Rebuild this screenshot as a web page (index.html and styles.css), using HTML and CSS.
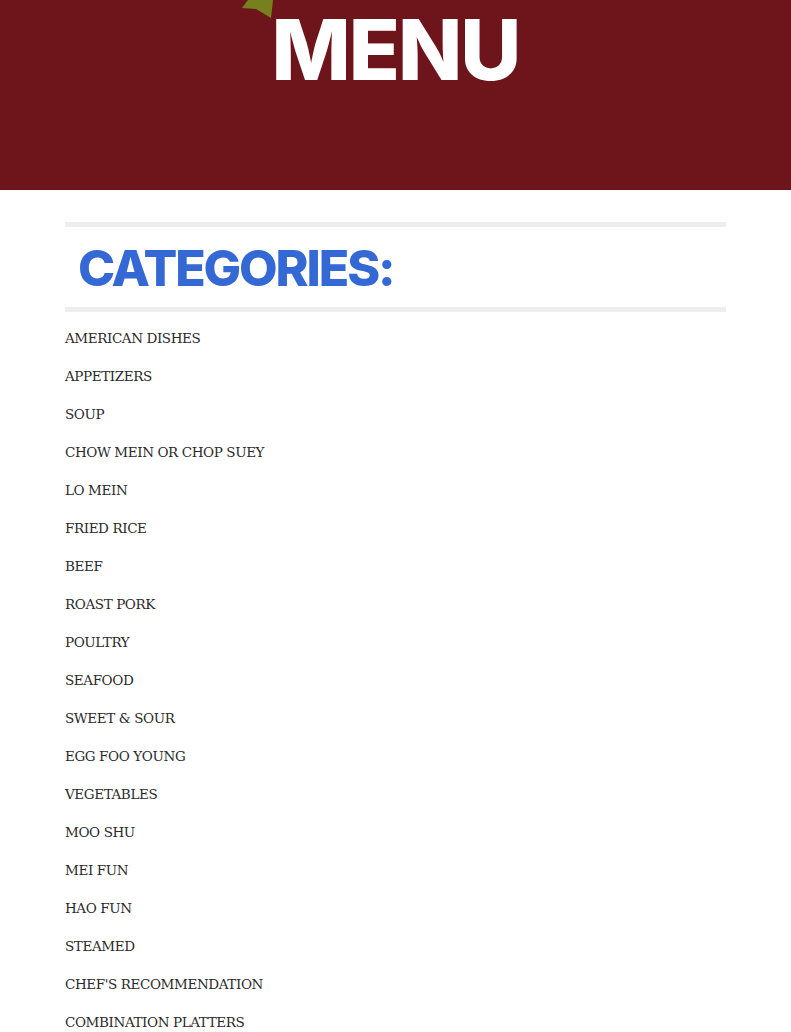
FILE: index.html
```html
<!DOCTYPE html>
<html>
<head>
<meta charset="utf-8">
<link rel="stylesheet" href="styles.css">
</head>
<body>
<header class="hero">
  <svg class="star" width="40" height="22" viewBox="0 0 40 22"><polygon points="8,0 2,8 16,9 31,18 33,0" fill="#76801f"/></svg>
  <h1 class="hero-title">MENU</h1>
</header>
<main class="content">
  <div class="cat-box"><h2 class="cat-title">CATEGORIES:</h2></div>
  <ul class="cat-list">
    <li>AMERICAN DISHES</li>
    <li>APPETIZERS</li>
    <li>SOUP</li>
    <li>CHOW MEIN OR CHOP SUEY</li>
    <li>LO MEIN</li>
    <li>FRIED RICE</li>
    <li>BEEF</li>
    <li>ROAST PORK</li>
    <li>POULTRY</li>
    <li>SEAFOOD</li>
    <li>SWEET &amp; SOUR</li>
    <li>EGG FOO YOUNG</li>
    <li>VEGETABLES</li>
    <li>MOO SHU</li>
    <li>MEI FUN</li>
    <li>HAO FUN</li>
    <li>STEAMED</li>
    <li>CHEF'S RECOMMENDATION</li>
    <li>COMBINATION PLATTERS</li>
  </ul>
</main>
</body>
</html>
```
FILE: styles.css
```css
html, body { margin: 0; padding: 0; background: #fff; }
.hero {
  position: relative;
  height: 190px;
  background: #6e151b;
  display: flex;
  justify-content: center;
  align-items: flex-start;
}
.star { position: absolute; left: 240px; top: 0; }
.hero-title {
  margin: 0;
  padding-top: 2px;
  font-family: Inter, sans-serif;
  font-weight: 800;
  font-size: 84px;
  line-height: 96px;
  letter-spacing: -2px;
  color: #fff;
}
.content { padding: 32px 65px 0; }
.cat-box {
  border-top: 5px solid #eeeeee;
  border-bottom: 5px solid #eeeeee;
  height: 80px;
  display: flex;
  align-items: center;
  padding-left: 13px;
}
.cat-title {
  margin: 0;
  font-family: Inter, sans-serif;
  font-weight: 800;
  font-size: 50px;
  line-height: 1;
  letter-spacing: -2.1px;
  color: #3468d4;
  margin-top: 2px;
}
.cat-list {
  list-style: none;
  margin: 0;
  padding: 7px 0 0;
}
.cat-list li {
  font-family: "DejaVu Serif", serif;
  font-size: 13.5px;
  letter-spacing: -0.4px;
  line-height: 38px;
  color: #2a2a2a;
}
```
